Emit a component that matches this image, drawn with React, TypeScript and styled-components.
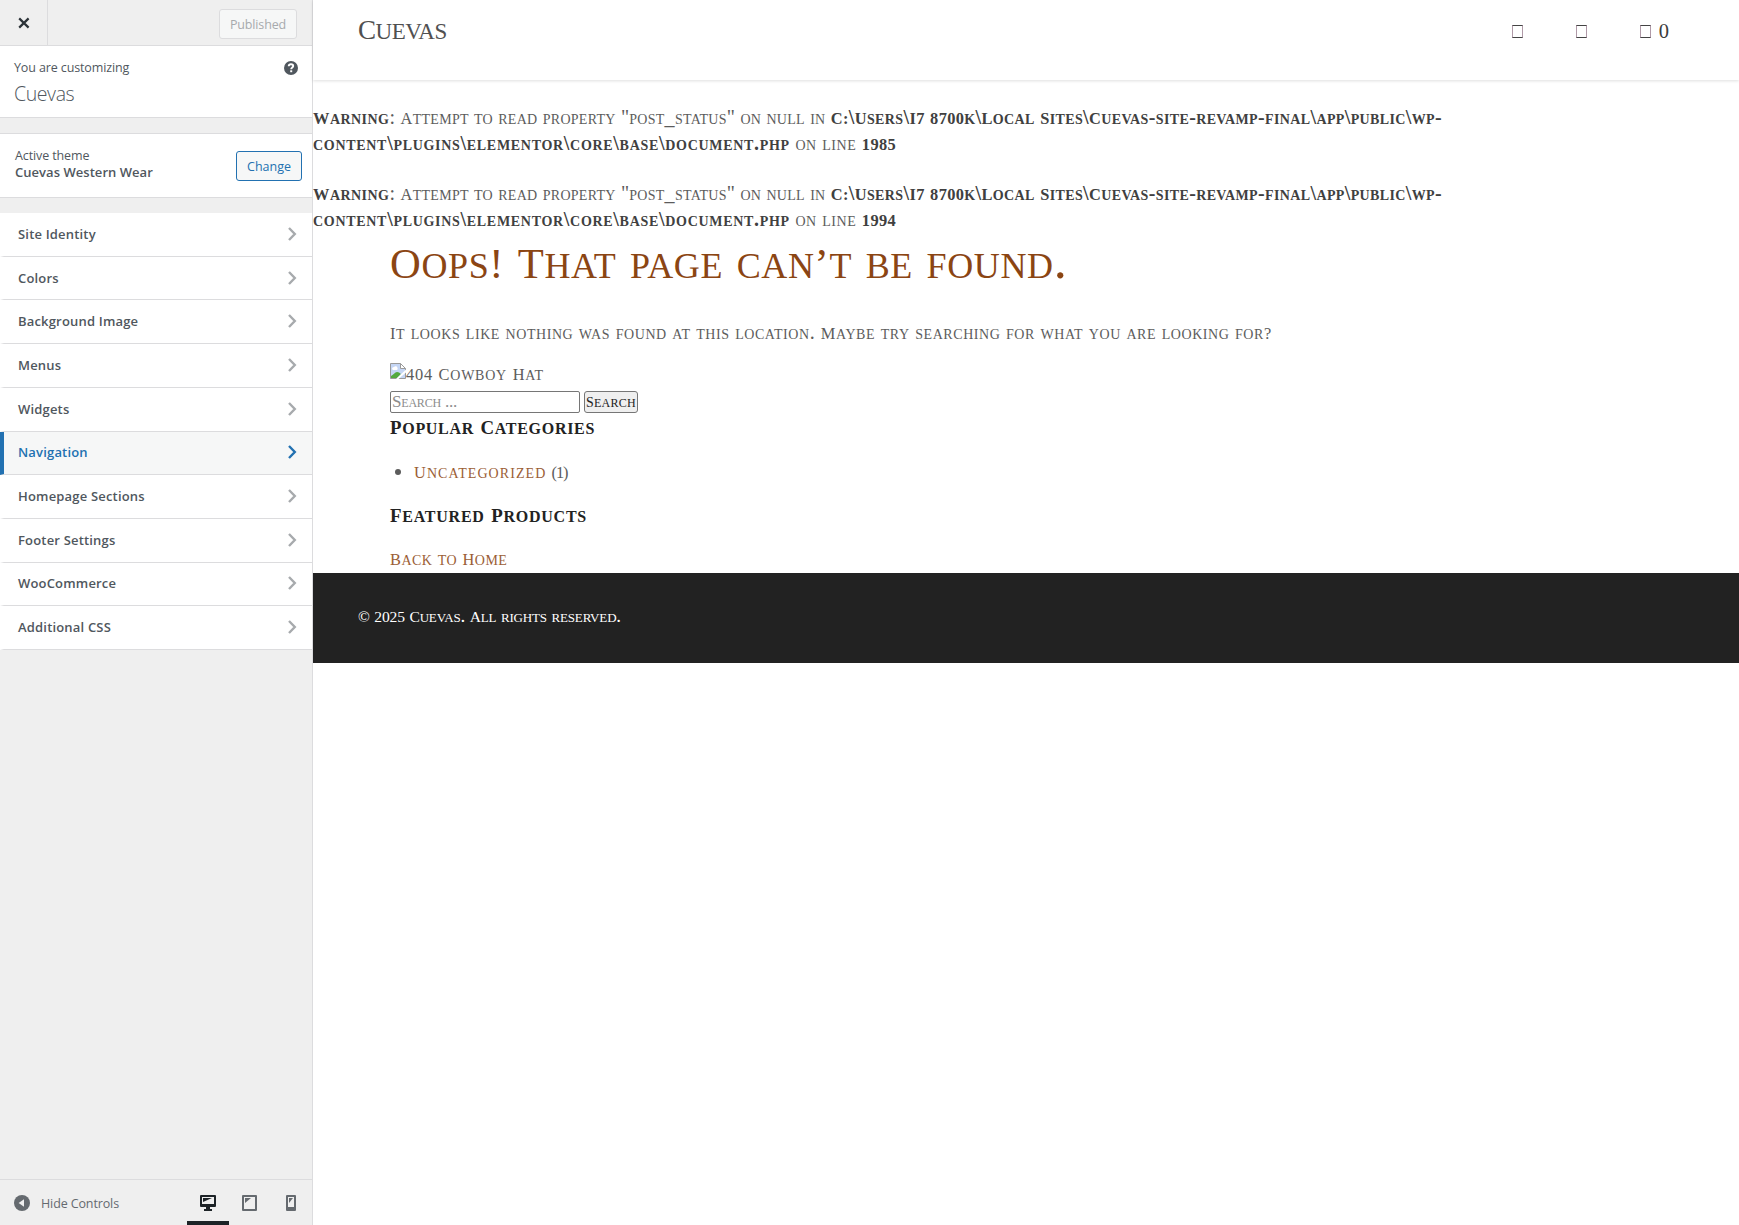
import React from "react";
import styled, { createGlobalStyle, css } from "styled-components";

const GlobalStyle = createGlobalStyle`
  *, *::before, *::after { box-sizing: border-box; }
  html, body { margin: 0; background: #fff; }
  body { overflow: hidden; }
  h1, h2, h3, p, ul { margin: 0; padding: 0; font-weight: 400; }
  button, input { font: inherit; margin: 0; }
`;

/* ---------- shared ---------- */

const Shell = styled.div`
  display: grid;
  grid-template-columns: 313px 1fr;
  height: 1225px;
  width: 100%;
`;

const Tracked = styled.span<{ $track: number }>`
  letter-spacing: ${(p) => p.$track}px;
`;

/* ---------- customizer sidebar ---------- */

const Sidebar = styled.aside`
  display: flex;
  flex-direction: column;
  background: #efefef;
  border-right: 1px solid #dcdcde;
  font-family: "Open Sans", "Noto Sans", sans-serif;
  font-size: 12.5px;
  letter-spacing: -0.12px;
  color: #50575e;
`;

const TopBar = styled.header`
  display: flex;
  justify-content: space-between;
  height: 46px;
  border-bottom: 1px solid #dcdcde;
`;

const CloseButton = styled.button`
  display: flex;
  align-items: center;
  justify-content: center;
  width: 48px;
  padding: 1px 0 0;
  border: 0;
  border-right: 1px solid #dcdcde;
  background: none;
  color: #2c3338;
`;

const PublishButton = styled.button`
  width: 78px;
  height: 30px;
  margin: 9px 15px 0 0;
  padding: 0;
  border: 1px solid #dcdcde;
  border-radius: 3px;
  background: #f6f7f7;
  color: #a7aaad;
  letter-spacing: -0.15px;
`;

const SiteInfo = styled.section`
  display: flex;
  justify-content: space-between;
  height: 72px;
  padding: 11px 14px 0 14px;
  background: #fff;
  border-bottom: 1px solid #dcdcde;
`;

const Notice = styled.p`
  line-height: 22px;
`;

const SiteTitle = styled.h1`
  font-size: 19.5px;
  font-weight: 300;
  line-height: 28px;
  margin-top: 1px;
  letter-spacing: -0.4px;
`;

const HelpIcon = styled.svg`
  width: 14px;
  height: 14px;
  margin-top: 4px;
`;

const ThemeBox = styled.section`
  display: flex;
  align-items: center;
  justify-content: space-between;
  height: 65px;
  margin-top: 15px;
  padding: 1px 10px 0 15px;
  background: #fff;
  border-top: 1px solid #dcdcde;
  border-bottom: 1px solid #dcdcde;
`;

const ThemeText = styled.div`
  line-height: 17px;
  padding-bottom: 4px;
`;

const ThemeName = styled.div`
  font-size: 13px;
  font-weight: 600;
  letter-spacing: 0.04px;
`;

const ChangeButton = styled.button`
  width: 66px;
  height: 30px;
  padding: 0;
  border: 1px solid #2271b1;
  border-radius: 3px;
  background: #f6f7f7;
  color: #2271b1;
`;

const SectionList = styled.ul`
  margin-top: 15px;
  list-style: none;
`;

const SectionRow = styled.li<{ $active?: boolean }>`
  display: flex;
  align-items: center;
  justify-content: space-between;
  height: 43.71px;
  padding: 0 15px 1px 14px;
  border-left: 4px solid #fff;
  border-bottom: 1px solid #dcdcde;
  background: #fff;
  color: #50575e;
  font-size: 13px;
  font-weight: 600;
  letter-spacing: 0.18px;
  ${(p) =>
    p.$active &&
    css`
      border-left-color: #2271b1;
      background: #f6f7f7;
      color: #2271b1;
    `}
`;

const Chevron = styled.svg<{ $active?: boolean }>`
  width: 10px;
  height: 14px;
  stroke: ${(p) => (p.$active ? "#2271b1" : "#a7aaad")};
`;

const BottomBar = styled.footer`
  display: flex;
  justify-content: space-between;
  height: 46px;
  margin-top: auto;
  border-top: 1px solid #dcdcde;
`;

const HideButton = styled.button`
  display: flex;
  align-items: center;
  gap: 11px;
  padding: 1px 0 0 14px;
  border: 0;
  background: none;
  color: #656a6f;
  letter-spacing: -0.12px;
`;

const Devices = styled.div`
  display: flex;
`;

const Device = styled.button<{ $active?: boolean }>`
  display: flex;
  justify-content: center;
  width: ${(p) => (p.$active ? 42 : 41.5)}px;
  padding: 15px 0 0;
  border: 0;
  border-bottom: 4px solid ${(p) => (p.$active ? "#1d2327" : "transparent")};
  background: none;
  color: ${(p) => (p.$active ? "#1d2327" : "#656a6f")};
`;

/* ---------- previewed site ---------- */

const Preview = styled.main`
  font-family: "Liberation Serif", "Times New Roman", serif;
  font-variant: small-caps;
  font-size: 20px;
  line-height: 26px;
  color: #5c5c5c;
  background: #fff;
`;

const CapWord = styled.span`
  display: inline-block;
  &::first-letter {
    font-size: 0.82em;
    line-height: 0;
  }
`;

const Figure = styled.span`
  font-size: 0.82em;
  line-height: 0;
`;

const SiteHeader = styled.header`
  display: flex;
  justify-content: space-between;
  height: 80px;
  padding: 8px 70px 0 45px;
  box-shadow: 0 1px 3px rgba(0, 0, 0, 0.13);
`;

const Logo = styled.div`
  font-size: 33px;
  line-height: 41px;
  letter-spacing: -0.5px;
  color: #505050;
`;

const HeaderLinks = styled.nav`
  display: flex;
  gap: 53px;
  padding-top: 17px;
`;

const HeaderLink = styled.a`
  display: flex;
  gap: 8px;
  height: 13px;
  align-items: center;
  font-size: 20.5px;
  color: #3c3c3c;
`;

const CartCount = styled.span`
  padding-bottom: 2px;
`;

const MissingGlyph = styled.span`
  width: 11px;
  height: 13px;
  border: 1px solid #b09aa8;
  border-top-color: #444;
  border-bottom-color: #444;
`;

const Warnings = styled.div`
  padding-top: 25px;
`;

const WarningText = styled.p`
  line-height: 25.5px;
  white-space: nowrap;
  & + & {
    margin-top: 25px;
  }
  b {
    color: #404040;
  }
`;

const Content = styled.div`
  padding: 5px 0 0 77px;
`;

const PageTitle = styled.h1`
  font-size: 52px;
  line-height: 48px;
  color: #8b4513;
  white-space: nowrap;
`;

const Lead = styled.p`
  margin-top: 34px;
`;

const BrokenImage = styled.div`
  display: flex;
  align-items: flex-start;
  height: 26px;
  margin-top: 15px;
  svg {
    width: 16px;
    height: 16px;
    margin-top: 3px;
  }
`;

const SearchForm = styled.form`
  display: flex;
  gap: 4px;
  height: 22px;
  margin: 5px 0 1px;
  font-size: 17px;
  line-height: 20px;
`;

const SearchInput = styled.input`
  width: 190px;
  height: 22px;
  padding: 0 1px 1px;
  border: 1px solid #767676;
  border-radius: 2px;
  background: #fff;
  font-variant: small-caps;
  letter-spacing: -0.2px;
  &::placeholder {
    color: #8c8c8c;
    opacity: 1;
  }
`;

const SearchButton = styled.button`
  width: 54px;
  height: 22px;
  padding: 0 0 1px;
  border: 1px solid #767676;
  border-radius: 3px;
  background: #efefef;
  color: #222;
  font-variant: small-caps;
  letter-spacing: 0.26px;
`;

const Heading = styled.h2`
  font-size: 23px;
  font-weight: 700;
  color: #222;
`;

const Categories = styled.ul`
  margin: 18px 0;
  padding-left: 24px;
`;

const SiteLink = styled.a`
  color: #9b5e36;
`;

const BackLink = styled(SiteLink)`
  display: block;
  margin-top: 17px;
`;

const SiteFooter = styled.footer`
  height: 90px;
  margin-top: 2px;
  padding: 30px 45px;
  background: #222;
  color: #fff;
  font-size: 19px;
`;

/* Lowercase letters come out as small capitals; true capitals and figures sit only slightly above them. */
function Caps({ children, track = 0 }: { children: string; track?: number }) {
  const parts = children.split(/(\(?[A-Z]?\d+\)?|[!?’©]|[A-Z][^\s\\!?’]*)/);
  return (
    <Tracked $track={track}>
      {parts.map((part, i) => {
        if (i % 2 === 0) return part;
        return /[\d!?’©]/.test(part) ? (
          <Figure key={i}>{part}</Figure>
        ) : (
          <CapWord key={i}>{part}</CapWord>
        );
      })}
    </Tracked>
  );
}

function Warning({ line }: { line: string }) {
  return (
    <WarningText>
      <b>
        <Caps track={0.47}>Warning</Caps>
      </b>
      <Caps track={0.27}>{': Attempt to read property "post_status" on null in '}</Caps>
      <b>
        <Caps track={0.37}>{"C:\\Users\\I7 8700k\\Local Sites\\Cuevas-site-revamp-final\\app\\public\\wp-"}</Caps>
        <br />
        <Caps track={0.7}>{"content\\plugins\\elementor\\core\\base\\document.php"}</Caps>
      </b>
      <Caps track={0.54}>{" on line "}</Caps>
      <b>
        <Caps track={0.4}>{line}</Caps>
      </b>
    </WarningText>
  );
}

const sections = [
  "Site Identity",
  "Colors",
  "Background Image",
  "Menus",
  "Widgets",
  "Navigation",
  "Homepage Sections",
  "Footer Settings",
  "WooCommerce",
  "Additional CSS",
];

export default function App() {
  return (
    <Shell>
      <GlobalStyle />
      <Sidebar>
        <TopBar>
          <CloseButton aria-label="Close">
            <svg width="12" height="12" viewBox="0 0 12 12" fill="none" stroke="currentColor" strokeWidth="2.2">
              <path d="M1.2 1.4l9.4 9.2M10.6 1.4L1.2 10.6" />
            </svg>
          </CloseButton>
          <PublishButton disabled>Published</PublishButton>
        </TopBar>
        <SiteInfo>
          <div>
            <Notice>You are customizing</Notice>
            <SiteTitle>Cuevas</SiteTitle>
          </div>
          <HelpIcon viewBox="0 0 14 14">
            <circle cx="7" cy="7" r="7" fill="#50575e" />
            <path
              d="M4.7 5.300C4.800 3.900 5.800 3.300 7 3.300c1.400 0 2.200.7 2.200 1.800 0 1.500-2 1.500-2 3.200"
              fill="none"
              stroke="#fff"
              strokeWidth="1.900"
            />
            <rect x="6.200" y="9.300" width="2" height="1.900" fill="#fff" />
          </HelpIcon>
        </SiteInfo>
        <ThemeBox>
          <ThemeText>
            <div>Active theme</div>
            <ThemeName>Cuevas Western Wear</ThemeName>
          </ThemeText>
          <ChangeButton>Change</ChangeButton>
        </ThemeBox>
        <SectionList>
          {sections.map((name) => {
            const active = name === "Navigation";
            return (
              <SectionRow key={name} $active={active}>
                {name}
                <Chevron $active={active} viewBox="0 0 10 14" fill="none" strokeWidth="2.400">
                  <path d="M2 1l5.800 6L2 13" />
                </Chevron>
              </SectionRow>
            );
          })}
        </SectionList>
        <BottomBar>
          <HideButton>
            <svg width="16" height="16" viewBox="0 0 16 16">
              <circle cx="8" cy="8" r="8" fill="#656a6f" />
              <path d="M10 4.200v7.600L4.600 8z" fill="#efefef" />
            </svg>
            Hide Controls
          </HideButton>
          <Devices>
            <Device $active aria-label="Desktop">
              <svg width="16" height="16" viewBox="0 0 16 16" fill="currentColor">
                <path fillRule="evenodd" d="M1 0h14a1 1 0 0 1 1 1v10a1 1 0 0 1-1 1h-5v2h2v2H4v-2h2v-2H1a1 1 0 0 1-1-1V1a1 1 0 0 1 1-1zM2 2v7h12V2z" />
                <path d="M3 3h9L3 7z" />
              </svg>
            </Device>
            <Device aria-label="Tablet">
              <svg width="15" height="16" viewBox="0 0 15 16" fill="currentColor">
                <path fillRule="evenodd" d="M1 0h13a1 1 0 0 1 1 1v14a1 1 0 0 1-1 1H1a1 1 0 0 1-1-1V1a1 1 0 0 1 1-1zM2 2v12h11V2z" />
                <path d="M3 3h6L3 8z" />
              </svg>
            </Device>
            <Device aria-label="Mobile">
              <svg width="10" height="16" viewBox="0 0 10 16" fill="currentColor">
                <path fillRule="evenodd" d="M1 0h8a1 1 0 0 1 1 1v14a1 1 0 0 1-1 1H1a1 1 0 0 1-1-1V1a1 1 0 0 1 1-1zM2 2v10h6V2z" />
                <path d="M3 3h4L3 8z" />
              </svg>
            </Device>
          </Devices>
        </BottomBar>
      </Sidebar>

      <Preview>
        <SiteHeader>
          <Logo>
            <CapWord>Cuevas</CapWord>
          </Logo>
          <HeaderLinks>
            <HeaderLink>
              <MissingGlyph />
            </HeaderLink>
            <HeaderLink>
              <MissingGlyph />
            </HeaderLink>
            <HeaderLink>
              <MissingGlyph />
              <CartCount>0</CartCount>
            </HeaderLink>
          </HeaderLinks>
        </SiteHeader>
        <Warnings>
          <Warning line="1985" />
          <Warning line="1994" />
        </Warnings>
        <Content>
          <PageTitle>
            <Caps track={0.62}>Oops! That page can’t be found.</Caps>
          </PageTitle>
          <Lead>
            <Caps track={0.57}>
              It looks like nothing was found at this location. Maybe try searching for what you are looking for?
            </Caps>
          </Lead>
          <BrokenImage>
            <svg viewBox="0 0 16 16">
              <path d="M.5.5h10l5 5v10H.5z" fill="#c5d6f5" stroke="#9a9a9a" />
              <path d="M10.500.5v5h5z" fill="#fff" stroke="#9a9a9a" />
              <path d="M2 6a2 2 0 0 1 2-2 2 2 0 0 1 3.500 1A1.500 1.500 0 0 1 7 7H3z" fill="#fff" />
              <path d="M1 15v-2c2-1 4-4 6-4s3 1.500 4 2l-4 4z" fill="#53a93f" />
              <path d="M16 6.500v3L8.500 16H6z" fill="#fff" />
            </svg>
            <Caps track={0.75}>404 Cowboy Hat</Caps>
          </BrokenImage>
          <SearchForm>
            <SearchInput placeholder="Search ..." />
            <SearchButton type="button">
              <CapWord>Search</CapWord>
            </SearchButton>
          </SearchForm>
          <Heading>
            <Caps track={0.7}>Popular Categories</Caps>
          </Heading>
          <Categories>
            <li>
              <SiteLink>
                <Caps track={1.08}>Uncategorized</Caps>
              </SiteLink>{" "}
              <Caps track={-1}>(1)</Caps>
            </li>
          </Categories>
          <Heading>
            <Caps track={0.76}>Featured Products</Caps>
          </Heading>
          <BackLink>
            <Caps track={0.45}>Back to Home</Caps>
          </BackLink>
        </Content>
        <SiteFooter>
          <Caps track={-0.16}>© 2025 Cuevas. All rights reserved.</Caps>
        </SiteFooter>
      </Preview>
    </Shell>
  );
}
